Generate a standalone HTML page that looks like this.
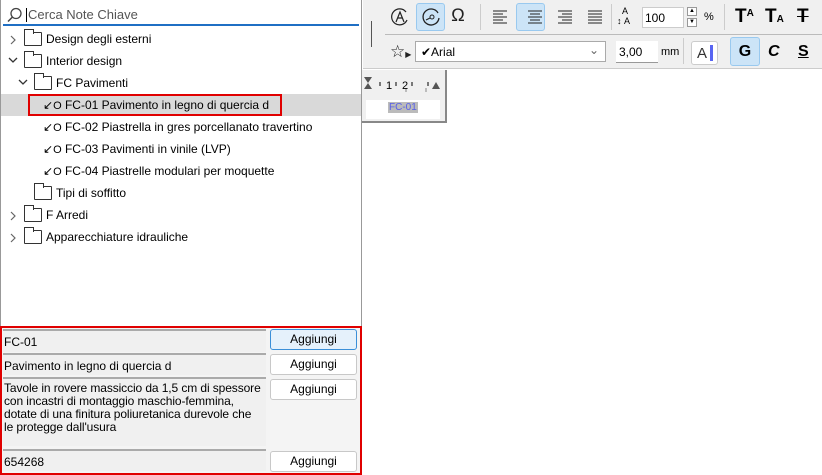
<!DOCTYPE html><html><head><style>
*{margin:0;padding:0;box-sizing:border-box}
body{width:822px;height:475px;background:#fff;font-family:"Liberation Sans",Arial,sans-serif;font-size:12px;color:#000;position:relative;overflow:hidden}
.a{position:absolute}
.row{position:absolute;height:22px;line-height:22px;white-space:nowrap}
.fold{display:inline-block;width:18px;height:14px;border:1px solid #333;border-radius:1px;vertical-align:-3px;margin-right:4px;background:#fff;position:relative}
.fold:before{content:"";position:absolute;left:-1px;top:-4px;width:8px;height:4px;border:1px solid #333;border-bottom:none;background:#fff}
.fld{position:absolute;left:3px;width:263px;background:#f0f0f0;border-top:2px solid #aaa;padding:3px 1px;line-height:13px;font-size:12px}
.btn{position:absolute;left:270px;width:87px;height:21px;border:1px solid #c8c8c8;border-radius:3px;background:#fff;text-align:center;line-height:19px;font-size:12px}
.ic{position:absolute;font-size:16px;color:#222}
</style></head><body>
<div class="a" style="left:0;top:0;width:362px;height:475px;border:1px solid #999;border-top:none"></div>
<div class="a" style="left:3px;top:2px;width:356px;height:24px;background:#fff;border-bottom:2px solid #1f6fc4"></div>
<svg class="a" style="left:7px;top:7px" width="16" height="16"><circle cx="9" cy="6.5" r="5" fill="none" stroke="#444" stroke-width="1.3"/><line x1="5.5" y1="10" x2="1" y2="14.5" stroke="#444" stroke-width="1.5"/></svg>
<div class="a" style="left:26px;top:8px;color:#555;font-size:13px;border-left:1px solid #000;padding-left:1px;line-height:14px">Cerca Note Chiave</div>

<svg class="a" style="left:10px;top:35px" width="8" height="10"><path d="M1 1 L5 5 L1 9" fill="none" stroke="#666" stroke-width="1.2"/></svg>
<div class="row" style="left:24px;top:28px"><span class="fold"></span>Design degli esterni</div>
<svg class="a" style="left:8px;top:57px" width="10" height="8"><path d="M1 1 L5 5 L9 1" fill="none" stroke="#333" stroke-width="1.3"/></svg>
<div class="row" style="left:24px;top:50px"><span class="fold"></span>Interior design</div>
<svg class="a" style="left:18px;top:79px" width="10" height="8"><path d="M1 1 L5 5 L9 1" fill="none" stroke="#333" stroke-width="1.3"/></svg>
<div class="row" style="left:34px;top:72px"><span class="fold"></span>FC Pavimenti</div>
<div class="a" style="left:1px;top:94px;width:360px;height:22px;background:#d9d9d9"></div>
<div class="a" style="left:28px;top:94px;width:254px;height:22px;border:2px solid #e00000"></div>
<div class="row" style="left:43px;top:94px">&#x2199;<span style="font-size:11px">O</span> FC-01 Pavimento in legno di quercia d</div>
<div class="row" style="left:43px;top:116px">&#x2199;<span style="font-size:11px">O</span> FC-02 Piastrella in gres porcellanato travertino</div>
<div class="row" style="left:43px;top:138px">&#x2199;<span style="font-size:11px">O</span> FC-03 Pavimenti in vinile (LVP)</div>
<div class="row" style="left:43px;top:160px">&#x2199;<span style="font-size:11px">O</span> FC-04 Piastrelle modulari per moquette</div>
<div class="row" style="left:34px;top:182px"><span class="fold"></span>Tipi di soffitto</div>
<svg class="a" style="left:10px;top:211px" width="8" height="10"><path d="M1 1 L5 5 L1 9" fill="none" stroke="#666" stroke-width="1.2"/></svg>
<div class="row" style="left:24px;top:204px"><span class="fold"></span>F Arredi</div>
<svg class="a" style="left:10px;top:233px" width="8" height="10"><path d="M1 1 L5 5 L1 9" fill="none" stroke="#666" stroke-width="1.2"/></svg>
<div class="row" style="left:24px;top:226px"><span class="fold"></span>Apparecchiature idrauliche</div>

<div class="a" style="left:0;top:326px;width:362px;height:149px;border:2px solid #e00000;background:#f4f4f4"></div>
<div class="fld" style="top:329px;height:23px;line-height:17px">FC-01</div>
<div class="btn" style="top:329px;background:#e5f1fb;border-color:#3a8fd8">Aggiungi</div>
<div class="fld" style="top:353px;height:22px;line-height:16px">Pavimento in legno di quercia d</div>
<div class="btn" style="top:354px">Aggiungi</div>
<div class="fld" style="top:377px;height:69px;white-space:nowrap;letter-spacing:-0.1px">Tavole in rovere massiccio da 1,5 cm di spessore<br>con incastri di montaggio maschio-femmina,<br>dotate di una finitura poliuretanica durevole che<br>le protegge dall'usura</div>
<div class="btn" style="top:379px">Aggiungi</div>
<div class="fld" style="top:449px;height:22px;line-height:16px">654268</div>
<div class="btn" style="top:451px">Aggiungi</div>

<div class="a" style="left:363px;top:0;width:459px;height:69px;background:#f0f0f0;border-bottom:1px solid #ccc"></div>
<div class="a" style="left:385px;top:34px;width:437px;height:1px;background:#bbb"></div>
<div class="a" style="left:371px;top:21px;width:1px;height:26px;background:#555"></div>
<div class="a" style="left:416px;top:3px;width:29px;height:28px;background:#cce4f7;border:1px solid #99c9ef;border-radius:3px"></div>
<div class="a" style="left:516px;top:3px;width:29px;height:28px;background:#cce4f7;border:1px solid #99c9ef;border-radius:3px"></div>
<svg class="a" style="left:390px;top:7px" width="20" height="20"><path d="M16 5 A8 8 0 1 0 17 13" fill="none" stroke="#222" stroke-width="1.2"/><path d="M6 15 L10 5 L14 15 M7.5 11h5" fill="none" stroke="#222" stroke-width="1.2"/></svg>
<svg class="a" style="left:421px;top:7px" width="20" height="20"><path d="M17 6 A8 8 0 1 0 18 11" fill="none" stroke="#222" stroke-width="1.3"/><circle cx="11" cy="10" r="2" fill="none" stroke="#222"/><path d="M9 11 L5 13" stroke="#222"/></svg>
<div class="ic" style="left:451px;top:5px;font-size:18px">&#x2126;</div>
<div class="a" style="left:480px;top:4px;width:1px;height:26px;background:#ccc"></div>
<svg class="a" style="left:493px;top:10px" width="140" height="14" stroke="#222"><path d="M0 1h14M0 4h10M0 7h14M0 10h10M0 13h14"/><path d="M35 1h14M37 4h10M35 7h14M37 10h10M35 13h14"/><path d="M65 1h14M69 4h10M65 7h14M69 10h10M65 13h14"/><path d="M95 1h14M95 4h14M95 7h14M95 10h14M95 13h14"/></svg>
<div class="a" style="left:611px;top:4px;width:1px;height:26px;background:#ccc"></div>
<div class="a" style="left:617px;top:6px;font-size:9px;line-height:10px">&nbsp;&nbsp;A<br>&#x2195;&nbsp;A</div>
<div class="a" style="left:642px;top:7px;width:42px;height:21px;background:#fff;border:1px solid #ccc;padding:3px 2px">100</div>
<div class="a" style="left:687px;top:7px;width:10px;height:9px;border:1px solid #999;font-size:6px;text-align:center;background:#fff">&#x25B2;</div>
<div class="a" style="left:687px;top:18px;width:10px;height:9px;border:1px solid #999;font-size:6px;text-align:center;background:#fff">&#x25BC;</div>
<div class="a" style="left:704px;top:11px;font-size:11px">%</div>
<div class="a" style="left:724px;top:4px;width:1px;height:26px;background:#ccc"></div>
<div class="a" style="left:735px;top:6px;font-size:19px;font-weight:bold">T<span style="font-size:10px;vertical-align:6px">A</span></div>
<div class="a" style="left:765px;top:6px;font-size:19px;font-weight:bold">T<span style="font-size:10px">A</span></div>
<div class="a" style="left:797px;top:6px;font-size:19px;font-weight:bold;text-decoration:line-through">T</div>
<div class="ic" style="left:390px;top:42px;font-size:17px">&#x2606;<span style="font-size:8px">&#x25B6;</span></div>
<div class="a" style="left:415px;top:41px;width:191px;height:21px;background:#fff;border:1px solid #aaa;padding:3px 5px">&#x2714;Arial<span style="position:absolute;right:6px;top:1px;color:#666">&#x2304;</span></div>
<div class="a" style="left:616px;top:41px;width:42px;height:22px;background:#fff;border-bottom:1px solid #999;padding:4px 3px">3,00</div>
<div class="a" style="left:661px;top:46px;font-size:11px">mm</div>
<div class="a" style="left:683px;top:38px;width:1px;height:26px;background:#ccc"></div>
<div class="a" style="left:691px;top:41px;width:27px;height:24px;background:#fff;border:1px solid #ccc;border-radius:3px;padding:3px 5px;font-size:15px;color:#333">A</div>
<div class="a" style="left:710px;top:45px;width:3px;height:16px;background:#5865f2"></div>
<div class="a" style="left:730px;top:37px;width:30px;height:29px;background:#cce4f7;border:1px solid #99c9ef;border-radius:3px;text-align:center;font-weight:bold;font-size:16px;line-height:27px">G</div>
<div class="a" style="left:768px;top:43px;font-weight:bold;font-style:italic;font-size:16px">C</div>
<div class="a" style="left:798px;top:43px;font-weight:bold;font-size:16px;text-decoration:underline">S</div>

<div class="a" style="left:362px;top:70px;width:85px;height:53px;background:#f0f0f0;border-right:2px solid #888;border-bottom:2px solid #888"></div>
<svg class="a" style="left:363px;top:76px" width="82" height="22"><path d="M1 1h8L5 7z M1 13h8L5 7z" fill="#555"/><path d="M69 13h8l-4-7z" fill="#555"/><path d="M17 6v4M33 6v4M49 6v4M65 6v4" stroke="#000"/><path d="M43 12v4M63 12v4" stroke="#888"/><text x="23" y="13" font-size="11" font-family="Liberation Sans">1</text><text x="39" y="13" font-size="11" font-family="Liberation Sans">2</text></svg>
<div class="a" style="left:366px;top:100px;width:74px;height:19px;background:#fff"></div>
<div class="a" style="left:388px;top:102px;background:#bbb;color:#5860e8;font-size:10px;padding:0 1px">FC-01</div>
</body></html>
